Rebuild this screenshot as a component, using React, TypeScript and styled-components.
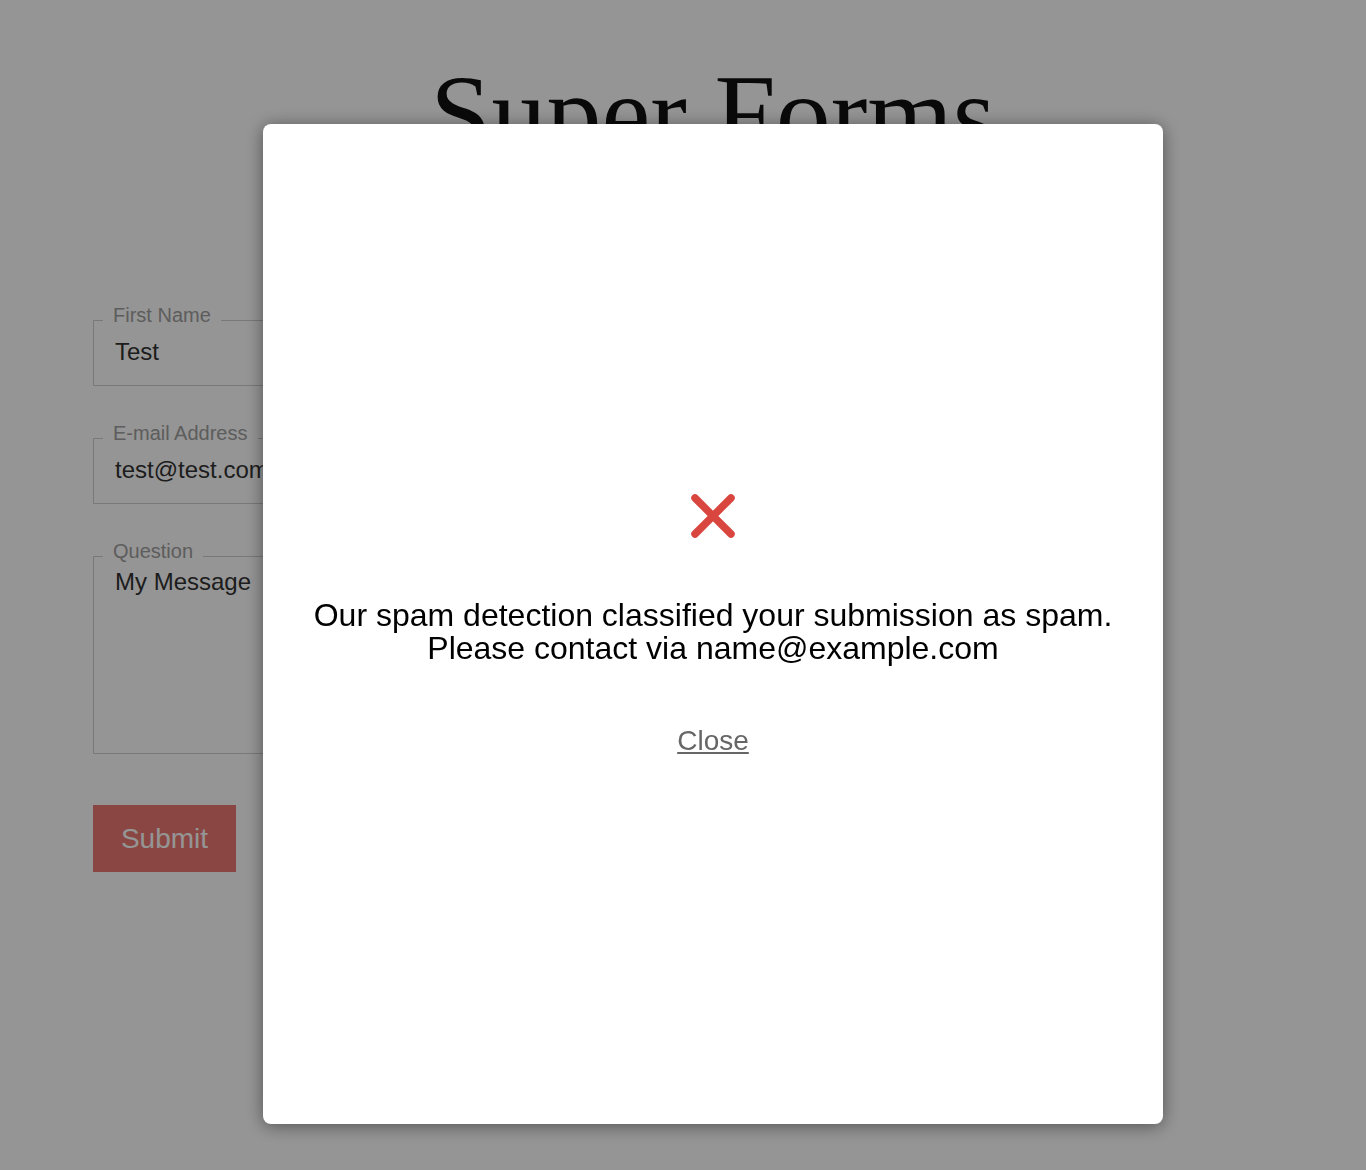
import React from 'react'
import styled, { createGlobalStyle } from 'styled-components'

const GlobalStyle = createGlobalStyle`
  html, body {
    margin: 0;
    padding: 0;
    background: #ffffff;
  }
  body {
    font-family: "Liberation Sans", Arial, sans-serif;
  }
`

const Page = styled.main`
  min-height: 1170px;
  padding: 51px 33px 0 93px;
  box-sizing: border-box;
`

const Title = styled.h1`
  margin: 0 0 127px;
  font-family: "Liberation Serif", "Times New Roman", serif;
  font-weight: 400;
  font-size: 110px;
  line-height: 126px;
  color: #111;
  text-align: center;
`

const Form = styled.form`
  display: flex;
  flex-direction: column;
  gap: 36px;
  width: 560px;
`

const Field = styled.fieldset`
  margin: 0;
  padding: 0 9px 12px;
  border: 1px solid #d0d0d0;
  min-width: 0;
`

// extra bottom padding lifts the label above the border line
const Legend = styled.legend`
  padding: 0 10px 10px;
  font-size: 20px;
  line-height: 22px;
  color: #a0a0a0;
`

const Input = styled.input`
  display: block;
  width: 100%;
  box-sizing: border-box;
  height: 42px;
  margin-top: -5px;
  padding: 0 12px;
  border: none;
  outline: none;
  background: transparent;
  font-family: "Liberation Sans", Arial, sans-serif;
  font-size: 24px;
  color: #333;
`

const TextArea = styled.textarea`
  display: block;
  width: 100%;
  box-sizing: border-box;
  height: 174px;
  margin-top: -5px;
  padding: 2px 12px;
  border: none;
  outline: none;
  resize: none;
  background: transparent;
  font-family: "Liberation Sans", Arial, sans-serif;
  font-size: 24px;
  line-height: 26px;
  color: #333;
`

const SubmitButton = styled.button`
  margin-top: 15px;
  align-self: flex-start;
  width: 143px;
  height: 67px;
  border: none;
  background: #ec7971;
  color: #fff;
  font-family: "Liberation Sans", Arial, sans-serif;
  font-size: 28px;
  cursor: pointer;
`

const Overlay = styled.div`
  position: fixed;
  inset: 0;
  background: rgba(0, 0, 0, 0.415);
`

const Modal = styled.div`
  position: fixed;
  left: 263px;
  top: 124px;
  width: 900px;
  height: 1000px;
  background: #fff;
  border-radius: 8px;
  box-shadow: 0 2px 18px rgba(0, 0, 0, 0.45);
  display: flex;
  flex-direction: column;
  align-items: center;
  justify-content: center;
  text-align: center;
`

const ErrorIcon = styled.svg`
  display: block;
  width: 46px;
  height: 46px;
  margin-bottom: 60px;
`

const Message = styled.p`
  margin: 0 0 60px;
  font-size: 32px;
  line-height: 33px;
  color: #000;
`

const CloseLink = styled.a`
  font-size: 28px;
  line-height: 31px;
  color: #666;
  text-decoration: underline;
  cursor: pointer;
`

const App = () => {
  return (
    <>
      <GlobalStyle />
      <Page>
        <Title>Super Forms</Title>
        <Form onSubmit={(e) => e.preventDefault()}>
          <Field>
            <Legend>First Name</Legend>
            <Input defaultValue="Test" />
          </Field>
          <Field>
            <Legend>E-mail Address</Legend>
            <Input defaultValue="test@test.com" />
          </Field>
          <Field>
            <Legend>Question</Legend>
            <TextArea defaultValue="My Message" />
          </Field>
          <SubmitButton type="submit">Submit</SubmitButton>
        </Form>
      </Page>

      <Overlay />
      <Modal role="dialog">
        <ErrorIcon viewBox="0 0 46 46">
          <path d="M5 5 L41 41 M41 5 L5 41" stroke="#d8463f" strokeWidth="7.5" strokeLinecap="round" fill="none" />
        </ErrorIcon>
        <Message>
          Our spam detection classified your submission as spam.
          <br />
          Please contact via name@example.com
        </Message>
        <CloseLink>Close</CloseLink>
      </Modal>
    </>
  )
}

export default App
